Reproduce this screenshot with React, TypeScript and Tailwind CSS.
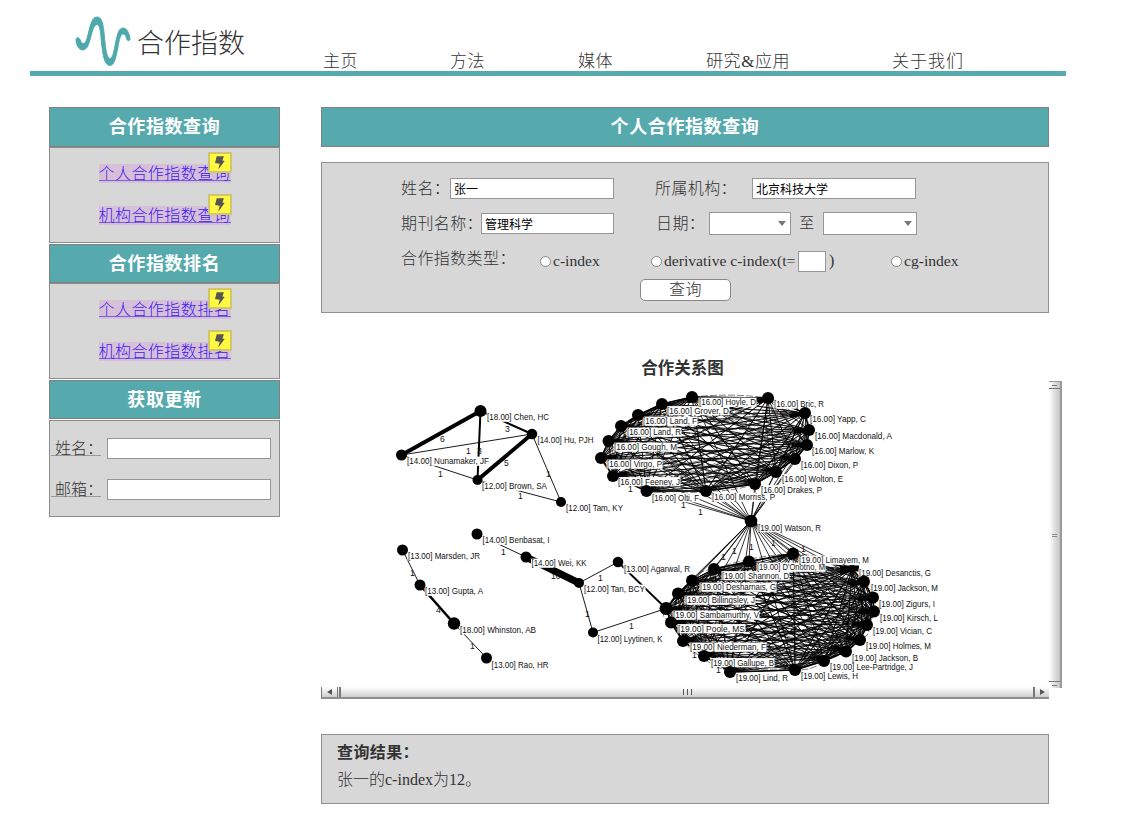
import React from "react";

type Node = [x: number, y: number, r: number, label: string, lx: number, cy: number, w: number];
type Edge = [a: string, b: string, width: number];
type Mark = [text: string, x: number, y: number];

const PEOPLE: Node[] = [
  [480.5, 411, 6, "[18.00] Chen, HC", 487, 417, 62],
  [532, 434, 5.3, "[14.00] Hu, PJH", 537.5, 440, 56],
  [401.5, 455, 5.5, "[14.00] Nunamaker, JF", 407, 461, 82],
  [477.5, 480, 5, "[12.00] Brown, SA", 482, 486, 65],
  [561, 502, 5, "[12.00] Tam, KY", 566, 508, 57],
  [402.5, 550, 5.5, "[13.00] Marsden, JR", 408, 556, 72],
  [420, 585, 5.5, "[13.00] Gupta, A", 425, 591, 58],
  [454, 623.5, 6.2, "[18.00] Whinston, AB", 460, 629.5, 76],
  [486.5, 658, 5.5, "[13.00] Rao, HR", 491.5, 664.5, 57],
  [477, 534, 5.5, "[14.00] Benbasat, I", 482.5, 540, 67],
  [526, 557, 5.5, "[14.00] Wei, KK", 531.5, 563, 55],
  [618, 562, 5.3, "[13.00] Agarwal, R", 624, 568.5, 66],
  [579, 583, 5, "[12.00] Tan, BCY", 584, 589, 61],
  [593, 632.5, 5, "[12.00] Lyytinen, K", 597.5, 639, 65],
];

const UPPER: Node[] = [
  [692, 397, 6, "[16.00] Hoyle, D", 699, 402, 57],
  [768, 398, 6, "[16.00] Bric, R", 774, 404, 50],
  [805, 413, 6, "[16.00] Yapp, C", 810, 419, 56],
  [809, 430, 6, "[16.00] Macdonald, A", 815, 436, 77],
  [807, 445, 6, "[16.00] Marlow, K", 812, 451, 62],
  [795, 459, 6, "[16.00] Dixon, P", 801, 465, 57],
  [776, 472, 6, "[16.00] Wolton, E", 782, 478.5, 61],
  [755, 484, 6, "[16.00] Drakes, P", 761, 489.5, 61],
  [706, 491, 6, "[16.00] Morriss, P", 712, 497, 63],
  [646.5, 491, 6, "[16.00] Olti, F", 652, 497.5, 47],
  [613, 476, 6, "[16.00] Feeney, J", 618, 481.5, 62],
  [601, 458, 6, "[16.00] Virgo, P", 607, 464, 55],
  [608.5, 441, 6, "[16.00] Gough, M", 614, 447, 63],
  [621, 426, 6, "[16.00] Land, R", 627, 432, 54],
  [638, 415, 6, "[16.00] Land, F", 643, 421, 54],
  [662, 404, 6, "[16.00] Grover, D", 667, 410.5, 62],
];

const LOWER: Node[] = [
  [793, 553.5, 6, "[19.00] Limayem, M", 799, 560, 70],
  [852, 569, 4, "[19.00] Desanctis, G", 859, 573, 72],
  [864, 581.5, 6, "[19.00] Jackson, M", 871, 588, 67],
  [873, 597.5, 6, "[19.00] Zigurs, I", 879, 604, 56],
  [874, 611.5, 6, "[19.00] Kirsch, L", 880, 618, 58],
  [867, 625, 6, "[19.00] Vician, C", 873, 631, 59],
  [860, 640, 6, "[19.00] Holmes, M", 866, 646, 65],
  [846, 651.5, 6, "[19.00] Jackson, B", 852, 658, 66],
  [824, 661, 6, "[19.00] Lee-Partridge, J", 830, 666.5, 83],
  [795, 670, 6, "[19.00] Lewis, H", 801, 675.5, 57],
  [730, 672, 6, "[19.00] Lind, R", 736, 678, 52],
  [704, 656, 6, "[19.00] Gallupe, B", 711, 662.5, 63],
  [683, 641, 6, "[19.00] Niederman, F", 690, 647, 76],
  [671, 622.5, 6, "[19.00] Poole, MS", 678, 628.5, 67],
  [666, 608.5, 6.5, "[19.00] Sambamurthy, V", 673, 615, 86],
  [678, 593.5, 6, "[19.00] Billingsley, J", 685, 600, 70],
  [692, 580.5, 6, "[19.00] Desharnais, G", 700, 587, 76],
  [714, 569, 6, "[19.00] Shannon, D", 722, 575.5, 67],
  [749, 561.5, 6, "[19.00] D'Onotno, M", 757, 567, 68],
];

const WATSON: Node = [751, 521, 6.3, "[19.00] Watson, R", 758, 527.5, 63];

const LINKS: Edge[] = [
  ["Chen", "Nunamaker", 4],
  ["Chen", "Brown", 2],
  ["Chen", "Hu", 2],
  ["Hu", "Brown", 4],
  ["Hu", "Nunamaker", 0.9],
  ["Hu", "Tam", 0.9],
  ["Brown", "Nunamaker", 0.9],
  ["Brown", "Tam", 0.9],
  ["Marsden", "Gupta", 0.9],
  ["Gupta", "Whinston", 2.6],
  ["Whinston", "Rao", 0.9],
  ["Benbasat", "Wei", 0.9],
  ["Wei", "Tan,", 7],
  ["Tan,", "Agarwal", 0.9],
  ["Tan,", "Lyytinen", 0.9],
  ["Agarwal", "Sambamurthy", 1.8],
  ["Lyytinen", "Sambamurthy", 0.9],
];

const MARKS: Mark[] = [
  ["6", 440, 442], ["1", 466, 454], ["3", 477, 454], ["3", 505, 432], ["5", 504, 466],
  ["1", 438, 477], ["1", 518, 499], ["1", 546, 477], ["1", 410, 576], ["4", 436, 613],
  ["1", 470, 649], ["1", 501, 555], ["10", 551, 579], ["1", 598, 581], ["1", 585, 617],
  ["1", 629, 629], ["1", 628, 492], ["1", 681, 508], ["1", 698, 515], ["1", 732, 554],
  ["1", 721, 560], ["1", 749, 550], ["1", 771, 546], ["1", 801, 552], ["1", 692, 658],
  ["1", 716, 673],
];

const ALL = [...PEOPLE, ...UPPER, ...LOWER, WATSON];
const find = (key: string) => ALL.find((n) => n[3].includes(key))!;

function pairs(nodes: Node[]) {
  const out: [Node, Node][] = [];
  nodes.forEach((a, i) => nodes.slice(i + 1).forEach((b) => out.push([a, b])));
  return out;
}

function Line({ a, b, w }: { a: Node; b: Node; w: number }) {
  return <line x1={a[0]} y1={a[1]} x2={b[0]} y2={b[1]} stroke="#000" strokeWidth={w} />;
}

function Mesh({ nodes, cx, cy }: { nodes: Node[]; cx: number; cy: number }) {
  return (
    <g stroke="#000" fill="none">
      {pairs(nodes).map(([a, b], i) => <Line key={i} a={a} b={b} w={0.9} />)}
      {pairs(nodes).map(([a, b], i) => {
        const mx = (a[0] + b[0]) / 2;
        const my = (a[1] + b[1]) / 2;
        const k = (i % 4) * 0.08 - 0.1;
        return (
          <path
            key={i}
            d={`M${a[0]} ${a[1]}Q${mx + (cx - mx) * k} ${my + (cy - my) * k} ${b[0]} ${b[1]}`}
            strokeWidth="0.5"
            strokeDasharray="7 2"
          />
        );
      })}
      {nodes.map((n, i) => (
        <line key={i} x1={n[0]} y1={n[1]} x2={n[0] + (cx - n[0]) * 0.15} y2={n[1] + (cy - n[1]) * 0.1} strokeWidth="4" />
      ))}
      {nodes.map((n, i) => <Line key={i} a={n} b={nodes[(i + 1) % nodes.length]} w={1.4} />)}
    </g>
  );
}

function Graph() {
  return (
    <svg viewBox="321 381 728 306" width="728" height="306" className="block font-['Liberation_Sans',sans-serif] text-[8.6px] font-normal">
      <Mesh nodes={UPPER} cx={706} cy={444} />
      <Mesh nodes={LOWER} cx={772} cy={614} />
      {UPPER.map((n, i) => <Line key={i} a={n} b={WATSON} w={0.8} />)}
      {LOWER.map((n, i) => <Line key={i} a={n} b={WATSON} w={0.8} />)}
      {LINKS.map(([a, b, w], i) => <Line key={i} a={find(a)} b={find(b)} w={w} />)}
      <rect x="840" y="565.5" width="19" height="6" />
      {ALL.map((n) => (
        <rect key={n[3]} x={n[4] - 0.5} y={n[5] - 4.4} width={n[6] + 1} height="9.2" fill="#fff" />
      ))}
      {ALL.map((n) => <circle key={n[3]} cx={n[0]} cy={n[1]} r={n[2]} />)}
      {ALL.map((n) => (
        <text key={n[3]} x={n[4]} y={n[5] + 3} textLength={n[6]} lengthAdjust="spacingAndGlyphs" fill="#111">
          {n[3]}
        </text>
      ))}
      {MARKS.map(([t, x, y], i) => (
        <text key={i} x={x} y={y} fill="#111">{t}</text>
      ))}
    </svg>
  );
}

function Bolt() {
  return (
    <span className="absolute -top-3 -right-px flex h-[21px] w-6 items-center justify-center border-2 border-[#cfc66e] bg-[#fff840]">
      <svg width="10" height="14" viewBox="0 0 10 14" className="block shrink-0">
        <path d="M1.7 0.2H8.9L7.4 4.4L9.6 5L3.3 13.6L4.7 7.8L0 7.1Z" fill="#555" />
      </svg>
    </span>
  );
}

function SideLink({ children }: { children: string }) {
  return (
    <a className="relative block h-[19px] w-[132px] bg-[#d8bfd8]">
      <span className="block h-[17px] border-b border-[#7b62dc] text-[16px] leading-[20px] tracking-[0.45px] whitespace-nowrap text-[#3a1cf5]">
        {children}
      </span>
      <Bolt />
    </a>
  );
}

function Bar({ children, className = "" }: { children: string; className?: string }) {
  return (
    <h2 className={`flex items-center justify-center border border-[#808080] bg-[#56aaae] pt-px text-[18px] font-bold tracking-[0.6px] text-white ${className}`}>
      {children}
    </h2>
  );
}

function LinkPanel({ links }: { links: string[] }) {
  return (
    <div className="flex h-24 flex-col items-center gap-[23px] border border-[#8c8c8c] bg-[#d7d7d7] pt-4">
      {links.map((l) => <SideLink key={l}>{l}</SideLink>)}
    </div>
  );
}

function Colon() {
  return <span className="inline-block w-2">：</span>;
}

function Field({ value = "", className = "" }: { value?: string; className?: string }) {
  return (
    <input
      defaultValue={value}
      className={`h-[21px] shrink-0 border border-[#979797] bg-white px-[3px] text-[12px] font-normal text-black outline-none ${className}`}
    />
  );
}

function UpdateRow({ label }: { label: string }) {
  return (
    <div className="flex h-[21px] items-start">
      <span className="mt-0.5 h-[16px] w-[50px] border-b border-[#999] pl-1 text-[16px] leading-[18px] whitespace-nowrap">
        {label}
        <Colon />
      </span>
      <Field className="ml-[6px] w-[164px]" />
    </div>
  );
}

function Drop({ className }: { className: string }) {
  return (
    <div className={`flex h-[23px] shrink-0 items-center justify-end border border-[#979797] bg-white pr-[4px] ${className}`}>
      <svg width="8" height="5" viewBox="0 0 8 5"><path d="M0 0H8L4 5Z" fill="#777" /></svg>
    </div>
  );
}

function Radio({ children, className }: { children: string; className: string }) {
  return (
    <label className={`flex shrink-0 items-center gap-[2px] text-[15.6px] leading-5 whitespace-nowrap ${className}`}>
      <span className="h-[11px] w-[11px] shrink-0 rounded-full border border-[#888] bg-white" />
      <span>{children}</span>
    </label>
  );
}

function Logo() {
  return (
    <svg width="56" height="52" viewBox="75 15 56 52" className="block">
      <path
        fill="#4ea8ac"
        stroke="#4ea8ac"
        strokeWidth="0.9"
        strokeLinejoin="round"
        d="M76 40C76 37 79 37 80 39.5C82 45 85 45 87 38.5C90 28 91 17 97 17C103 17 103.5 27 105 42C106 52 107.5 58.5 110 58.5C113 58.5 114 50 115.5 43C117.5 33 119 28 123 28C127 28 129 33 130 38C130.5 41 127.5 42 126.5 38.5C125.5 35 124.5 34 123 34C120.5 34 119.5 39 118 47C116 57 114.5 65.5 110 65.5C104.5 65.5 103 56 101.5 43C100.5 32 100 24.5 97 24.5C93.500 24.5 92 33 90 40C88 47 86 50 82.500 50C78.500 50 76 44 76 40Z"
      />
    </svg>
  );
}

export default function App() {
  return (
    <div className="h-[826px] w-[1135px] overflow-hidden bg-white font-['Liberation_Serif','Noto_Sans_CJK_SC',serif] font-light text-[#333]">
      <header className="ml-[30px] flex h-[76px] w-[1036px] border-b-[5px] border-[#56aaae] pt-[15px]">
        <div className="flex h-[52px] w-[293px] shrink-0 pl-[45px]">
          <Logo />
          <h1 className="ml-[6px] pt-[14px] text-[27px] leading-[30px] font-light">合作指数</h1>
        </div>
        <nav className="flex pt-[37px] text-[17px] leading-[20px] tracking-[0.6px] whitespace-nowrap">
          <a className="w-[127px]">主页</a>
          <a className="w-[128px]">方法</a>
          <a className="w-[128px]">媒体</a>
          <a className="w-[186px]">研究&amp;应用</a>
          <a className="tracking-[1px]">关于我们</a>
        </nav>
      </header>

      <div className="flex items-start pt-[31px] pl-[49px]">
        <aside className="w-[231px] shrink-0">
          <Bar className="h-10">合作指数查询</Bar>
          <LinkPanel links={["个人合作指数查询", "机构合作指数查询"]} />
          <Bar className="mt-px h-[39px]">合作指数排名</Bar>
          <LinkPanel links={["个人合作指数排名", "机构合作指数排名"]} />
          <Bar className="mt-px h-[39px]">获取更新</Bar>
          <div className="mt-px flex h-[97px] flex-col gap-5 border border-[#8c8c8c] bg-[#d7d7d7] pt-[17px] pl-px">
            <UpdateRow label="姓名" />
            <UpdateRow label="邮箱" />
          </div>
        </aside>

        <main className="ml-[41px] w-[742px] shrink-0">
          <Bar className="h-10 w-[728px]">个人合作指数查询</Bar>

          <form className="mt-[15px] h-[151px] w-[728px] border border-[#919191] bg-[#d7d7d7] pt-[15px] pl-[79px] text-[16px] tracking-[0.4px] whitespace-nowrap">
            <div className="flex h-[21px] items-center">
              <span className="w-[49px] shrink-0">姓名<Colon /></span>
              <Field value="张一" className="w-[164px] tracking-normal" />
              <span className="ml-[41px] w-[97px] shrink-0">所属机构<Colon /></span>
              <Field value="北京科技大学" className="w-[164px] tracking-normal" />
            </div>
            <div className="mt-[13px] flex h-[23px] items-center">
              <span className="w-[80px] shrink-0">期刊名称<Colon /></span>
              <Field value="管理科学" className="w-[133px] tracking-normal" />
              <span className="ml-[42px] w-[53px] shrink-0">日期<Colon /></span>
              <Drop className="w-[82px]" />
              <span className="w-[32px] shrink-0 text-center text-[15px]">至</span>
              <Drop className="w-[94px]" />
            </div>
            <div className="mt-4 flex h-5 items-center tracking-normal">
              <span className="-mt-1 w-[139px] shrink-0 tracking-[0.4px]">合作指数类型<Colon /></span>
              <Radio className="w-[111px]">c-index</Radio>
              <Radio className="w-[147px]">derivative c-index(t=</Radio>
              <Field className="w-[28px]" />
              <span className="w-[65px] shrink-0 pl-[3px]">)</span>
              <Radio className="w-[80px]">cg-index</Radio>
            </div>
            <button type="button" className="mt-2 ml-[239px] flex h-[22px] w-[91px] items-center justify-center rounded-[5px] border border-[#888] bg-white text-[16px]">
              查询
            </button>
          </form>

          <h3 className="mt-[45px] w-[723px] text-center text-[16.5px] leading-[22px] font-bold">合作关系图</h3>

          <div className="flex h-[319px] w-[742px]">
            <div className="mt-px w-[728px] shrink-0">
              <Graph />
              <div className="flex h-[12px] items-stretch border-b-2 border-[#8f8f8f] bg-linear-to-b from-white to-[#cfcfcf]">
                <span className="flex w-[17px] items-center justify-center border-x border-[#777]">
                  <svg width="5" height="6" viewBox="0 0 5 6"><path d="M5 0V6L0 3Z" fill="#555" /></svg>
                </span>
                <span className="w-[3px] border-r-2 border-[#777]" />
                <span className="flex flex-1 items-center justify-center gap-[3px] pb-px">
                  <i className="h-[6px] w-px bg-[#555]" />
                  <i className="h-[6px] w-px bg-[#555]" />
                  <i className="h-[6px] w-px bg-[#555]" />
                </span>
                <span className="flex w-4 items-center justify-center border-l-2 border-[#777]">
                  <svg width="5" height="6" viewBox="0 0 5 6"><path d="M0 0V6L5 3Z" fill="#555" /></svg>
                </span>
              </div>
            </div>
            <div className="mt-px flex h-[307px] w-[13px] flex-col border-t border-r-2 border-[#999] bg-linear-to-r from-white to-[#c4c4c4]">
              <span className="flex h-[7px] items-center justify-center border-b border-[#777]"><i className="h-px w-[5px] bg-[#777]" /></span>
              <span className="flex flex-1 flex-col items-center justify-center gap-px">
                <i className="h-px w-[5px] bg-[#888]" />
                <i className="h-px w-[5px] bg-[#888]" />
              </span>
              <span className="flex h-[7px] items-center justify-center border-t border-[#777]"><i className="h-px w-[5px] bg-[#777]" /></span>
            </div>
          </div>

          <section className="mt-[35px] h-[70px] w-[728px] border border-[#919191] bg-[#d7d7d7] pt-1 pl-[15px]">
            <h4 className="text-[16px] leading-[27px] font-bold tracking-[0.4px]">查询结果<Colon /></h4>
            <p className="text-[16px] leading-[27px]">张一的c-index为12。</p>
          </section>
        </main>
      </div>
    </div>
  );
}
